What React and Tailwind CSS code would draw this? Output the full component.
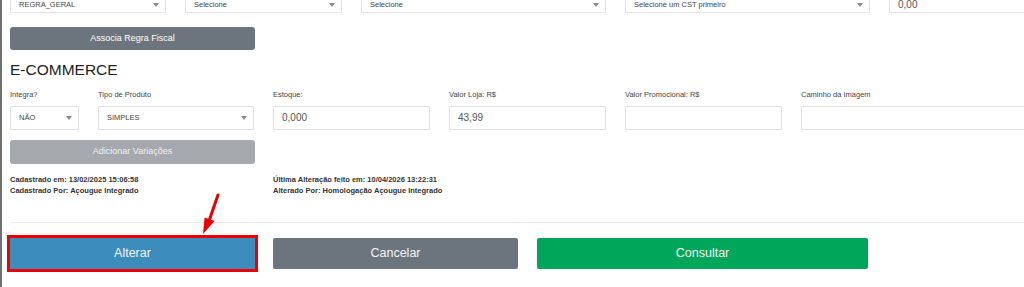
import React from "react";

function Caret() {
  return (
    <span className="w-0 h-0 border-l-[3px] border-r-[3px] border-t-[4px] border-l-transparent border-r-transparent border-t-[#8a8a8a]" />
  );
}

function Select({ value, w, h = "h-[24px]" }) {
  return (
    <div
      className={`${w} ${h} shrink-0 border border-[#e2e2e2] bg-white flex items-center justify-between pl-[8px] pr-[6px] text-[7.5px] leading-[9px] text-[#444]`}
    >
      <span>{value}</span>
      <Caret />
    </div>
  );
}

function Input({ value, w, h = "h-[24px]" }) {
  return (
    <div
      className={`${w} ${h} shrink-0 border border-[#e2e2e2] bg-white flex items-center pl-[8px] text-[10px] leading-[12px] text-[#555]`}
    >
      {value}
    </div>
  );
}

function Field({ label, children, w }) {
  return (
    <div className={`${w} shrink-0 flex flex-col`}>
      <div className="text-[7.5px] leading-[10px] text-[#444] mb-[5.5px] whitespace-nowrap">{label}</div>
      {children}
    </div>
  );
}

export default function App() {
  return (
    <div className="relative w-[1024px] h-[287px] overflow-hidden bg-white border-l-2 border-[#707070] font-['Liberation_Sans',Arial,sans-serif]">
      <div className="pl-[8px]">
        {/* top row (cut at the top edge) */}
        <div className="flex gap-[19px] -mt-[4px]">
          <Select value="REGRA_GERAL" w="w-[156px]" h="h-[17px]" />
          <Select value="Selecione" w="w-[157px]" h="h-[17px]" />
          <Select value="Selecione" w="w-[245px]" h="h-[17px]" />
          <Select value="Selecione um CST primeiro" w="w-[245px]" h="h-[17px]" />
          <Input value="0,00" w="w-[200px]" h="h-[17px]" />
        </div>

        <button className="mt-[14px] w-[245px] h-[23px] rounded-[3px] bg-[#6c757d] text-white text-[9px] flex items-center justify-center">
          Associa Regra Fiscal
        </button>

        <div className="mt-[10px] text-[15.5px] leading-[20px] text-[#222]">E-COMMERCE</div>

        <div className="mt-[10px] flex gap-[19px]">
          <Field label="Integra?" w="w-[69px]">
            <Select value="NÃO" w="w-[69px]" />
          </Field>
          <Field label="Tipo de Produto" w="w-[156px]">
            <Select value="SIMPLES" w="w-[156px]" />
          </Field>
          <Field label="Estoque:" w="w-[157px]">
            <Input value="0,000" w="w-[157px]" />
          </Field>
          <Field label="Valor Loja: R$" w="w-[157px]">
            <Input value="43,99" w="w-[157px]" />
          </Field>
          <Field label="Valor Promocional: R$" w="w-[157px]">
            <Input value="" w="w-[157px]" />
          </Field>
          <Field label="Caminho da Imagem" w="w-[250px]">
            <Input value="" w="w-[250px]" />
          </Field>
        </div>

        <button className="mt-[10px] w-[245px] h-[24px] rounded-[3px] bg-[#a5a9ad] text-[#f1f1f1] text-[9px] flex items-center justify-center">
          Adicionar Variações
        </button>

        <div className="mt-[10px] flex gap-[18px] text-[7.5px] leading-[11.5px] font-bold text-[#333]">
          <div className="w-[245px] shrink-0">
            <div>Cadastrado em: 13/02/2025 15:06:58</div>
            <div>Cadastrado Por: Açougue Integrado</div>
          </div>
          <div>
            <div>Última Alteração feito em: 10/04/2026 13:22:31</div>
            <div>Alterado Por: Homologação Açougue Integrado</div>
          </div>
        </div>

        <div className="mt-[25px] h-px bg-[#ececec]" />

        <div className="mt-[15px] flex gap-[18px]">
          <button className="w-[245px] h-[31px] bg-[#3c8dbc] text-[#f4f4f4] text-[12.5px] outline-[3px] outline-solid outline-[#ee0000] flex items-center justify-center">
            Alterar
          </button>
          <button className="w-[245px] h-[31px] rounded-[2px] bg-[#6c757d] text-[#f4f4f4] text-[12.5px] flex items-center justify-center">
            Cancelar
          </button>
          <button className="ml-[1px] w-[331px] h-[31px] rounded-[2px] bg-[#00a65a] text-[#f4f4f4] text-[12.5px] flex items-center justify-center">
            Consultar
          </button>
        </div>
      </div>

      {/* annotation arrow */}
      <svg className="absolute left-0 top-0 pointer-events-none" width="1024" height="287">
        <line x1="216" y1="195" x2="207" y2="221" stroke="#e80000" strokeWidth="3" strokeLinecap="round" />
        <polygon points="201,234 202.6,217.5 212.6,221" fill="#e80000" />
      </svg>
    </div>
  );
}
